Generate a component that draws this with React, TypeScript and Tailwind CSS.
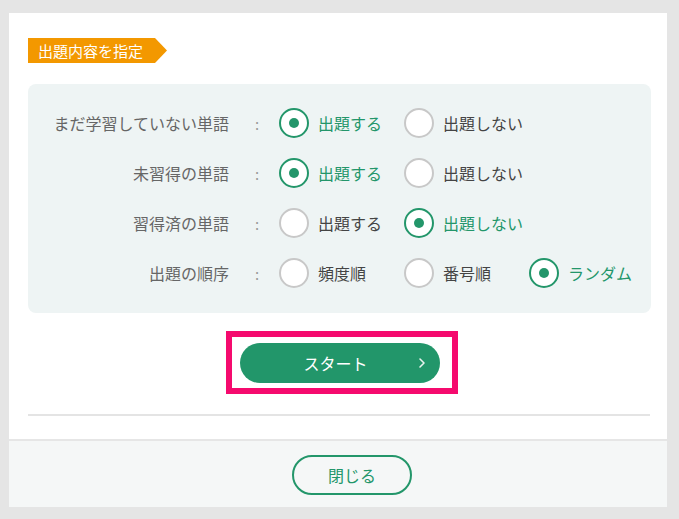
import React from "react";

const font = { fontFamily: '"Noto Sans CJK JP", "Noto Sans", sans-serif' };

function Radio({ checked, label, last }: { checked: boolean; label: string; last?: boolean }) {
  return (
    <div className={`flex items-center gap-[9px] ${last ? "" : "w-[125px]"}`}>
      <span
        className={`flex h-[30px] w-[30px] shrink-0 items-center justify-center rounded-full bg-white border-2 ${
          checked ? "border-[#23966a]" : "border-[#c8c8c8]"
        }`}
      >
        {checked && <span className="h-[10px] w-[10px] rounded-full bg-[#23966a]" />}
      </span>
      <span className={`text-[16px] leading-none ${checked ? "text-[#23966a]" : "text-[#444]"}`}>{label}</span>
    </div>
  );
}

function Row({ label, options }: { label: string; options: { label: string; checked: boolean }[] }) {
  return (
    <div className="flex h-[30px] items-center">
      <div className="w-[201px] text-right text-[16px] leading-none text-[#666]">{label}</div>
      <div className="w-[50px] pl-[26px] text-[15px] leading-none text-[#999]">:</div>
      {options.map((o, i) => (
        <Radio key={i} checked={o.checked} label={o.label} last={i === options.length - 1} />
      ))}
    </div>
  );
}

export default function App() {
  return (
    <div className="h-[519px] w-[679px] bg-[#e5e5e5] pl-[9px] pt-[13px]" style={font}>
      <div className="flex h-[494px] w-[658px] flex-col bg-white">
        <div className="flex-1 px-[19px] pt-[25px]">
          <div className="flex h-[25px] w-[139px] items-center bg-[#f39800] pl-[10px] text-[15px] leading-none text-white [clip-path:polygon(0_0,127px_0,139px_50%,127px_100%,0_100%)]">
            出題内容を指定
          </div>
          <div className="mt-[21px] flex h-[229px] w-[623px] flex-col gap-[20px] rounded-lg bg-[#eef4f4] pt-[24px]">
            <Row
              label="まだ学習していない単語"
              options={[
                { label: "出題する", checked: true },
                { label: "出題しない", checked: false },
              ]}
            />
            <Row
              label="未習得の単語"
              options={[
                { label: "出題する", checked: true },
                { label: "出題しない", checked: false },
              ]}
            />
            <Row
              label="習得済の単語"
              options={[
                { label: "出題する", checked: false },
                { label: "出題しない", checked: true },
              ]}
            />
            <Row
              label="出題の順序"
              options={[
                { label: "頻度順", checked: false },
                { label: "番号順", checked: false },
                { label: "ランダム", checked: true },
              ]}
            />
          </div>
          <div className="mt-[18px] flex w-[623px] justify-center pl-[4px]">
            <div className="border-[6px] border-[#f50a6e] pb-[5px] pl-[8px] pr-[12px] pt-[6px]">
              <button className="relative flex h-[40px] w-[200px] items-center justify-center rounded-full bg-[#22966a] text-[16px] text-white">
                <span className="-ml-[8px]">スタート</span>
                <span className="absolute right-[14px] top-1/2 -translate-y-1/2">
                  <svg width="8" height="12" viewBox="0 0 8 12" fill="none">
                    <path d="M2 2l4 4-4 4" stroke="#e8f3ee" strokeWidth="1.6" strokeLinecap="round" strokeLinejoin="round" />
                  </svg>
                </span>
              </button>
            </div>
          </div>
          <div className="mt-[20px] h-[2px] w-[622px] bg-[#e4e4e4]" />
        </div>
        <div className="flex h-[68px] items-start justify-center border-t-2 border-[#e6e6e6] bg-[#f5f7f7] pt-[14px]">
          <button className="ml-[28px] flex h-[40px] w-[120px] items-center justify-center rounded-full border-2 border-[#23966a] text-[16px] text-[#23966a]">
            閉じる
          </button>
        </div>
      </div>
    </div>
  );
}
